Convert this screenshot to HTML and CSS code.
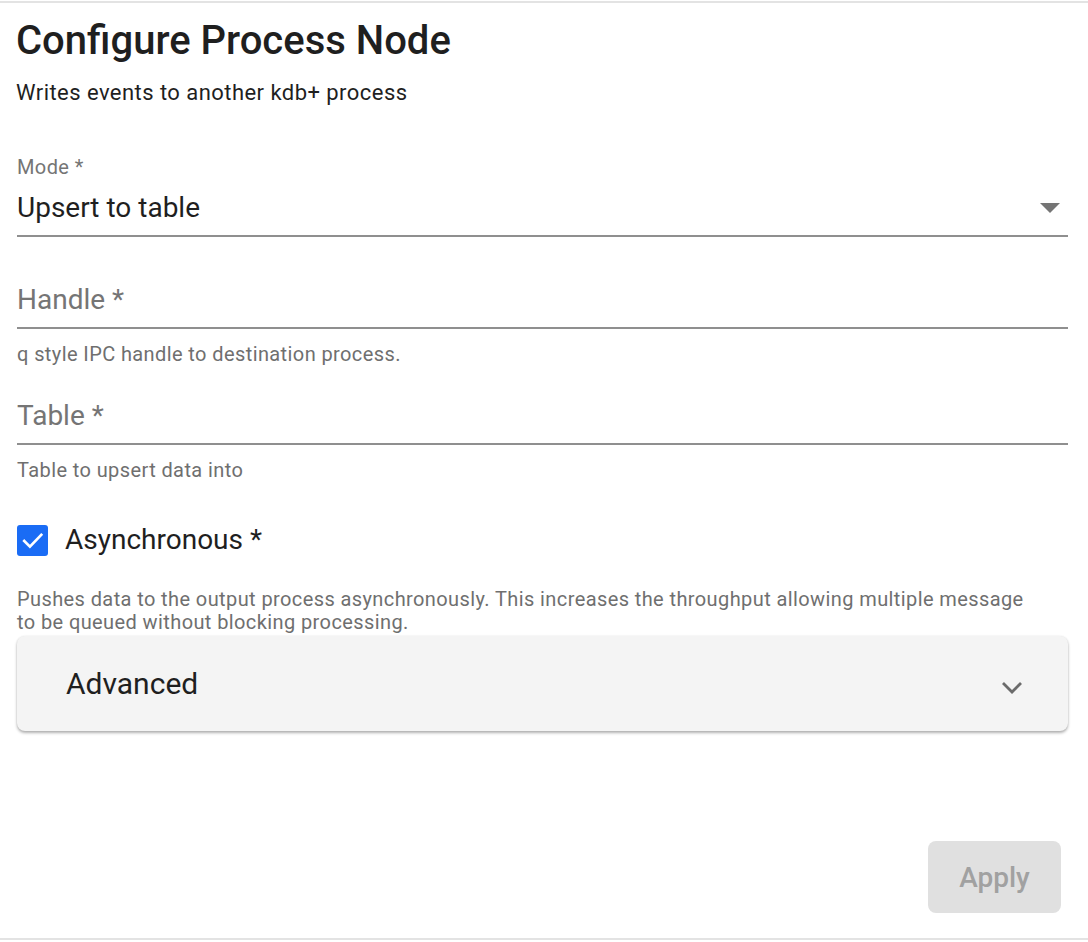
FILE: index.html
```html
<!DOCTYPE html>
<html>
<head>
<meta charset="utf-8">
<link rel="stylesheet" href="styles.css">
</head>
<body>
<div class="topline"></div>
<div class="page">
  <h1 class="title">Configure Process Node</h1>
  <p class="subtitle">Writes events to another kdb+ process</p>

  <div class="field select-field">
    <div class="label">Mode *</div>
    <div class="control">
      <span class="value">Upsert to table</span>
      <svg class="caret" width="20" height="10" viewBox="0 0 20 10"><path d="M0 0 L20 0 L10 10 Z" fill="#757575"/></svg>
    </div>
  </div>

  <div class="field text-field first">
    <div class="control"><span class="placeholder">Handle *</span></div>
    <div class="helper">q style IPC handle to destination process.</div>
  </div>

  <div class="field text-field">
    <div class="control"><span class="placeholder">Table *</span></div>
    <div class="helper">Table to upsert data into</div>
  </div>

  <label class="check-row">
    <span class="checkbox">
      <svg width="31" height="31" viewBox="0 0 30 30"><path d="M7 15.5 L12.5 21 L23.5 9.5" fill="none" stroke="#fff" stroke-width="2.6" stroke-linecap="square"/></svg>
    </span>
    <span class="check-label">Asynchronous *</span>
  </label>
  <div class="helper long">Pushes data to the output process asynchronously. This increases the throughput allowing multiple message to be queued without blocking processing.</div>

  <div class="panel">
    <span class="panel-title">Advanced</span>
    <svg class="chevron" width="22" height="14" viewBox="0 0 22 14"><path d="M2 2 L11 11 L20 2" fill="none" stroke="#6b6b6b" stroke-width="2.8"/></svg>
  </div>

  <div class="actions">
    <button class="apply" disabled>Apply</button>
  </div>
</div>
<div class="bottomline"></div>
</body>
</html>
```

FILE: styles.css
```css
* { box-sizing: border-box; }
html, body { margin: 0; padding: 0; background: #fff; }
body {
  font-family: Roboto, "Liberation Sans", Arial, sans-serif;
  color: #1f1f1f;
  width: 1088px;
  height: 942px;
  overflow: hidden;
}
.topline { height: 2px; background: #e3e3e3; margin-top: 1px; }
.bottomline { height: 2px; background: #e3e3e3; margin-top: 25px; }
.page { padding: 0 20px 0 17px; }
.title {
  margin: 14px 0 0 -1px;
  font-size: 40px;
  line-height: 48px;
  font-weight: 500;
  color: #1f1f1f;
}
.subtitle {
  margin: 16px 0 0 -1px;
  font-size: 22px;
  line-height: 24px;
  letter-spacing: 0.45px;
  color: #1f1f1f;
}
.label {
  margin-top: 51px;
  font-size: 20px;
  line-height: 22px;
  letter-spacing: 0.4px;
  color: #757575;
}
.control {
  display: flex;
  align-items: center;
  justify-content: space-between;
  border-bottom: 2px solid #8f8f8f;
  padding-bottom: 11px;
}
.select-field .control { margin-top: 14px; }
.value { font-size: 28px; line-height: 32px; color: #1f1f1f; }
.caret { margin-right: 8px; }
.text-field .control { margin-top: 35px; }
.text-field.first .control { margin-top: 47px; }
.placeholder { font-size: 28px; line-height: 32px; color: #757575; }
.helper {
  font-size: 20px;
  line-height: 22px;
  letter-spacing: 0.4px;
  color: #6f6f6f;
  margin-top: 14px;
}
.check-row {
  display: flex;
  align-items: center;
  gap: 17px;
  margin-top: 43px;
}
.checkbox {
  width: 31px;
  height: 31px;
  border-radius: 3px;
  background: #1a6cf5;
  display: flex;
}
.check-label { font-size: 28px; line-height: 32px; color: #1f1f1f; }
.helper.long {
  margin-top: 32px;
  line-height: 23px;
  padding-right: 30px;
}
.panel {
  margin-top: 2px;
  height: 95px;
  background: #f4f4f4;
  border-radius: 8px;
  box-shadow: 0 2px 3px rgba(0,0,0,0.3), 0 0 2px rgba(0,0,0,0.08);
  display: flex;
  align-items: center;
  justify-content: space-between;
  padding: 0 45px 0 49px;
}
.panel-title { font-size: 30px; line-height: 34px; color: #1f1f1f; }
.chevron { margin-top: 8px; }
.actions {
  display: flex;
  justify-content: flex-end;
  margin-top: 110px;
  padding-right: 7px;
}
.apply {
  width: 133px;
  height: 72px;
  border: none;
  border-radius: 8px;
  background: #e0e0e0;
  color: #a1a1a1;
  font-family: Roboto, "Liberation Sans", Arial, sans-serif;
  font-size: 28px;
  font-weight: 500;
  padding: 0;
}
```
